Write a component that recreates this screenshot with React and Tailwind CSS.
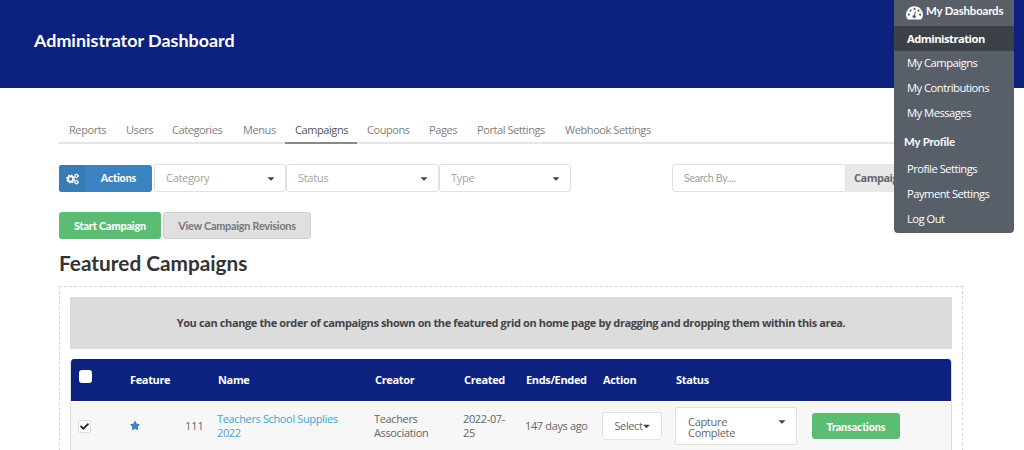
import React from "react";
import { FaCaretDown, FaStar, FaCheck } from "react-icons/fa";

const lato = "font-['Lato',sans-serif]";

const tabs = [
  { label: "Reports", width: "w-[57px]" },
  { label: "Users", width: "w-[46px]" },
  { label: "Categories", width: "w-[71px]" },
  { label: "Menus", width: "w-[52px]" },
  { label: "Campaigns", width: "w-[72px]", active: true },
  { label: "Coupons", width: "w-[62px]" },
  { label: "Pages", width: "w-[48px]" },
  { label: "Portal Settings", width: "w-[88px]" },
  { label: "Webhook Settings", width: "w-[106px]" },
];

function GaugeIcon() {
  return (
    <svg viewBox="0 0 17 14" className="mt-[6px] h-[14px] w-[17px] shrink-0">
      <path d="M8.5 0.3A8.3 8.3 0 0 0 1.5 13.1Q1.8 13.6 2.4 13.6H14.6Q15.2 13.6 15.5 13.1A8.3 8.3 0 0 0 8.5 0.3Z" fill="#fff" />
      <g fill="#585f69">
        <circle cx="2.9" cy="8.7" r="1.1" />
        <circle cx="4.6" cy="4.6" r="1.1" />
        <circle cx="8.5" cy="2.9" r="1.1" />
        <circle cx="12.4" cy="4.6" r="1.1" />
        <circle cx="14.1" cy="8.7" r="1.1" />
        <circle cx="8.2" cy="10.6" r="1.7" />
      </g>
      <path d="M8.3 10.4L9.4 5.7" stroke="#585f69" strokeWidth="1" strokeLinecap="round" />
    </svg>
  );
}

function GearsIcon() {
  return (
    <svg viewBox="0 0 13 12" className="h-[12px] w-[13px]" fill="none" stroke="#fff">
      <circle cx="4.6" cy="6" r="2.7" strokeWidth="1.9" />
      <circle cx="4.6" cy="6" r="3.9" strokeWidth="1.2" strokeDasharray="1.53 1.53" />
      <circle cx="10.4" cy="2.9" r="1.4" strokeWidth="1.1" />
      <circle cx="10.4" cy="2.9" r="2.1" strokeWidth="0.8" strokeDasharray="1.1 1.1" />
      <circle cx="10.4" cy="9.2" r="1.4" strokeWidth="1.1" />
      <circle cx="10.4" cy="9.2" r="2.1" strokeWidth="0.8" strokeDasharray="1.1 1.1" />
    </svg>
  );
}

function Tabs() {
  return (
    <nav className="flex h-7 w-[904px] border-b-2 border-[#e6e6e6] text-[11px] tracking-[-0.42px]">
      {tabs.map((t) => (
        <a
          key={t.label}
          className={`${t.width} -mb-[2px] flex h-7 shrink-0 whitespace-nowrap pl-[10px] pt-[5px] leading-[18px] ${
            t.active ? "border-b-2 border-[#868a88] text-[#555]" : "text-[#808080]"
          }`}
        >
          {t.label}
        </a>
      ))}
    </nav>
  );
}

function Filter({ label, width }) {
  return (
    <div className={`${width} flex h-7 items-center justify-between rounded-[3px] border border-[#e0e0e0] bg-white pl-[11px] pr-[10px] text-[11.2px] tracking-[-0.4px] text-[#a3a3a3]`}>
      <span>{label}</span>
      <FaCaretDown className="h-[11px] w-[8px] text-[#444]" />
    </div>
  );
}

function Toolbar() {
  return (
    <div className="mt-5 flex h-7 w-[904px]">
      <button className={`${lato} mt-px flex h-[27px] w-[93px] overflow-hidden rounded-[3px] bg-[#3b83c0] text-[10.6px] font-black tracking-[-0.1px] text-white`}>
        <span className="flex h-full w-[26px] items-center justify-center bg-[#387cb6]">
          <GearsIcon />
        </span>
        <span className="flex h-full flex-1 items-center justify-center">Actions</span>
      </button>
      <div className="ml-[2px] flex">
        <Filter label="Category" width="w-[132px]" />
        <Filter label="Status" width="w-[153px]" />
        <Filter label="Type" width="w-[132px]" />
      </div>
      <div className="ml-[101px] flex h-7 flex-1">
        <div className={`${lato} flex w-[174px] items-center rounded-l-[3px] border border-[#e0e0e0] pl-[11px] text-[10.7px] tracking-[-0.35px] text-[#a0a0a0]`}>
          Search By....
        </div>
        <div className="flex flex-1 items-center bg-[#e8e8e8] pl-[8px] text-[11px] font-bold tracking-[-0.5px] text-[#666]">Campaigns</div>
      </div>
    </div>
  );
}

const heads = ["", "Feature", "", "Name", "Creator", "Created", "Ends/Ended", "Action", "Status", ""];
const columns =
  "grid grid-cols-[59px_54px_34px_157px_89px_62px_77px_73px_136px_140px]";

function Table() {
  return (
    <div className="mt-[10px] h-[120px] w-[882px] overflow-hidden rounded-t-[4px] border-x border-[#dedede]">
      <div className={`${columns} h-[42px] items-center bg-[#0d227f] text-[11px] font-bold tracking-[-0.35px] text-white`}>
        {heads.map((h, i) =>
          i === 0 ? (
            <span key={i} className="-mt-[8px] ml-[8px] h-[13px] w-[13px] rounded-[3px] bg-white" />
          ) : (
            <span key={i} className="whitespace-nowrap">{h}</span>
          )
        )}
      </div>
      <div className={`${columns} h-[78px] bg-[#f7f7f7] text-[11px] leading-[14px] tracking-[-0.36px] text-[#666]`}>
        <span className="ml-[7px] mt-[19px] flex h-[13px] w-[13px] items-center justify-center rounded-[2px] border border-[#ddd] bg-white">
          <FaCheck className="h-[9px] w-[9px] text-[#222]" />
        </span>
        <FaStar className="mt-[19px] h-[11px] w-[10px] text-[#3b83c0]" />
        <span className="mt-[18px] ml-px tracking-[-0.1px]">111</span>
        <span className="-ml-px mt-[11px] text-[#3fa4d0]">Teachers School Supplies<br />2022</span>
        <span className="-ml-px mt-[11px]">Teachers<br />Association</span>
        <span className="-ml-px mt-[11px]">2022-07-<br />25</span>
        <span className="-ml-px mt-[18px] whitespace-nowrap">147 days ago</span>
        <span className="-ml-px mt-[11px] flex h-[28px] w-[60px] items-center justify-center rounded-[3px] border border-[#e2e2e2] bg-white">
          Select
          <FaCaretDown className="h-[10px] w-[7px] text-[#444]" />
        </span>
        <span className="-ml-px mt-[6px] flex h-[38px] w-[122px] justify-between rounded-[2px] border border-[#e2e2e2] bg-white pl-[12px] pr-[10px] pt-[8px] leading-[11px] tracking-[-0.3px]">
          <span>Capture<br />Complete</span>
          <FaCaretDown className="h-[11px] w-[8px] text-[#444]" />
        </span>
        <span className={`${lato} mt-[12px] flex h-[26px] w-[88px] items-center justify-center rounded-[3px] bg-[#5bbd72] pt-px text-[10.7px] font-black tracking-[-0.1px] text-white`}>
          Transactions
        </span>
      </div>
    </div>
  );
}

function MenuItem({ label, active }) {
  return (
    <a className={`flex h-[25px] shrink-0 items-center pl-[13px] text-[11.2px] text-white ${active ? "bg-[#3b4147] pt-[2px] font-bold tracking-[-0.5px]" : "tracking-[-0.5px]"}`}>
      {label}
    </a>
  );
}

function UserMenu() {
  return (
    <aside className="absolute left-[894px] top-0 h-[233px] w-[120px] overflow-hidden rounded-b-[4px] bg-[#585f69]">
      <div className={`${lato} flex h-[26px] pl-[12px] text-[11.4px] font-bold tracking-[-0.15px] text-white`}>
        <GaugeIcon />
        <span className="ml-[3px] mt-[2px] whitespace-nowrap leading-[18px]">My Dashboards</span>
      </div>
      <MenuItem label="Administration" active />
      <MenuItem label="My Campaigns" />
      <MenuItem label="My Contributions" />
      <MenuItem label="My Messages" />
      <div className={`${lato} flex h-[31px] items-center pl-[10px] text-[11.4px] font-bold tracking-[-0.15px] text-white`}>My Profile</div>
      <MenuItem label="Profile Settings" />
      <MenuItem label="Payment Settings" />
      <MenuItem label="Log Out" />
    </aside>
  );
}

export default function App() {
  return (
    <div className="relative h-[450px] w-[1024px] overflow-hidden bg-white font-['Open_Sans',sans-serif]">
      <header className="flex h-[88px] bg-[#0d227f] pl-[34px] pt-[28px]">
        <h1 className={`${lato} text-[17.9px] font-bold leading-[25px] text-white`}>Administrator Dashboard</h1>
      </header>
      <main className="pl-[59px] pt-[28px]">
        <Tabs />
        <Toolbar />
        <div className={`${lato} mt-5 flex h-[27px] gap-[2px] text-[10.8px] tracking-[-0.15px]`}>
          <button className="h-[27px] w-[102px] rounded-[3px] bg-[#5bbd72] pt-px font-black text-white">Start Campaign</button>
          <button className="h-[27px] w-[148px] rounded-[3px] border border-[#cfcfcf] bg-[#e0e0e0] pt-px font-bold tracking-[-0.22px] text-[#777]">View Campaign Revisions</button>
        </div>
        <h2 className={`${lato} mt-[10px] h-[28px] text-[20.8px] font-bold leading-[28px] text-[#333]`}>Featured Campaigns</h2>
        <section className="mt-[9px] h-[180px] w-[904px] border border-dashed border-[#d6d6d6] p-[10px]">
          <p className="flex h-[52px] w-[882px] items-center justify-center bg-[#dcdcdc] text-[11px] font-bold tracking-[-0.38px] text-[#444]">
            You can change the order of campaigns shown on the featured grid on home page by dragging and dropping them within this area.
          </p>
          <Table />
        </section>
      </main>
      <UserMenu />
    </div>
  );
}
